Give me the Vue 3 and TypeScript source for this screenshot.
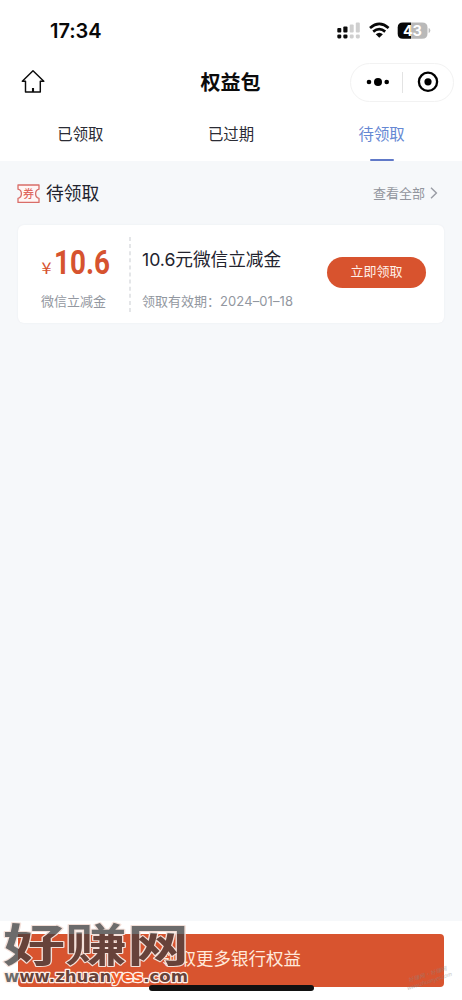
<script setup lang="ts">
import { ref } from 'vue'

interface Coupon {
  amount: string
  kind: string
  title: string
  expires: string
}

const tabs: string[] = ['已领取', '已过期', '待领取']
const active = ref<number>(2)
const coupons: Coupon[] = [
  { amount: '10.6', kind: '微信立减金', title: '10.6元微信立减金', expires: '2024–01–18' },
]
</script>

<template>
  <div class="page">
    <header class="status">
      <span class="time">17:34</span>
      <svg class="indicators" width="94" height="18" viewBox="0 0 94 18">
        <g fill="#0b0b0b">
          <rect x="0.3" y="6" width="4" height="4.4" rx="1" />
          <rect x="6.3" y="4.6" width="4.2" height="5.8" rx="1" />
          <rect x="0.3" y="12.4" width="4" height="4" rx="1.3" />
          <rect x="6.3" y="12.4" width="4.2" height="4" rx="1.3" />
        </g>
        <g fill="#cfcfcf">
          <rect x="12.7" y="2.5" width="4" height="8" rx="1" />
          <rect x="18.8" y="0.5" width="4" height="10" rx="1" />
          <rect x="12.7" y="12.4" width="4" height="4" rx="1.3" />
          <rect x="18.8" y="12.4" width="4" height="4" rx="1.3" />
        </g>
        <g fill="none" stroke="#080808" stroke-width="2.7">
          <path d="M33 5.9Q42.3 -2.1 51.6 5.9" />
          <path d="M36.2 9.6Q42.3 4.7 48.2 9.6" />
        </g>
        <path d="M38.7 12.2Q42.3 9.2 45.9 12.2L42.3 15.8Z" fill="#080808" />
        <path d="M74 .4H85Q90.5 .4 90.5 5.4V11.8Q90.5 16.8 85 16.8H74Z" fill="#b9b9b9" />
        <path d="M74 .4H66Q60.7 .4 60.7 5.4V11.8Q60.7 16.8 66 16.8H74Z" fill="#080808" />
        <path d="M91.6 6Q93.3 6.3 93.3 8.5T91.6 11Z" fill="#bdbdbd" />
        <text class="level" x="75.2" y="13.7" text-anchor="middle">43</text>
      </svg>
    </header>

    <nav class="nav">
      <svg class="home" width="26" height="26" viewBox="0 0 26 26" fill="none" stroke="#0c0c0c" stroke-width="1.45" stroke-linejoin="round">
        <path d="M5.5 12.2H2.3L13 1.8 23.8 12.2H20.3V23H5.5Z" />
        <path d="M13 19V23" stroke-width="2.1" />
      </svg>
      <h1>权益包</h1>
      <div class="capsule">
        <svg width="102" height="38" viewBox="0 0 102 38">
          <circle cx="18" cy="18" r="2.3" />
          <circle cx="27" cy="18" r="4" />
          <circle cx="35.7" cy="18" r="2.3" />
          <path d="M51.5 8V29" stroke="#e3e3e3" />
          <circle cx="77" cy="17.8" r="9.1" fill="none" stroke="#000" stroke-width="2.3" />
          <circle cx="77" cy="17.8" r="3.6" />
        </svg>
      </div>
    </nav>

    <div class="tabs">
      <button v-for="(tab, i) in tabs" :key="tab" :class="{ active: active === i }" @click="active = i">{{ tab }}</button>
    </div>

    <main>
      <div class="heading">
        <svg class="ticket" width="23" height="20" viewBox="0 0 23 20">
          <path d="M1 1H22V5.2Q18.6 6 18.6 9.7T22 14.4V18.4H1V14.4Q4.4 13.4 4.4 9.7T1 5.2Z" fill="#fff6f5" stroke="#d96d68" stroke-width="1.3" stroke-linejoin="round" />
          <text class="ticket-text" x="11.5" y="13.8" text-anchor="middle">券</text>
        </svg>
        <h2>待领取</h2>
        <a class="all">查看全部
          <svg width="8" height="12" viewBox="0 0 8 12" fill="none" stroke="#999ca4" stroke-width="1.4"><path d="M1 .8 6.4 6 1 11.2" /></svg>
        </a>
      </div>

      <article v-for="coupon in coupons" :key="coupon.title" class="card">
        <div class="value">
          <svg class="amount" width="76" height="46" viewBox="0 0 76 46">
            <text class="currency" x="0.5" y="34" textLength="10" lengthAdjust="spacingAndGlyphs">¥</text>
            <text class="number" x="13" y="34" textLength="56" lengthAdjust="spacingAndGlyphs">{{ coupon.amount }}</text>
          </svg>
          <span class="kind">{{ coupon.kind }}</span>
        </div>
        <svg class="divider" width="2" height="75" viewBox="0 0 2 75"><path d="M1 0V75" stroke="#d3d5d9" stroke-width="1.2" stroke-dasharray="4 3.1" /></svg>
        <div class="detail">
          <h3>{{ coupon.title }}</h3>
          <p>领取有效期：<span class="date">{{ coupon.expires }}</span></p>
        </div>
        <button class="claim">立即领取</button>
      </article>
    </main>

    <footer>
      <button class="more">领取更多银行权益</button>
      <i class="home-bar"></i>
      <svg class="brand" width="194" height="79" viewBox="0 0 194 79">
        <defs>
          <pattern id="brand-ink" width="194" height="79" patternUnits="userSpaceOnUse">
            <rect width="194" height="79" fill="#6c6b6b" />
            <rect x="18" y="13" width="176" height="53" fill="#67423a" />
          </pattern>
        </defs>
        <text class="brand-name" x="3" y="41" textLength="186" lengthAdjust="spacingAndGlyphs">好赚网</text>
        <text class="brand-url" x="4" y="60.5" textLength="184" lengthAdjust="spacingAndGlyphs">www.zhuan<tspan class="yes">yes</tspan>.com</text>
      </svg>
      <svg class="stamp" width="60" height="38" viewBox="0 0 60 38">
        <g transform="rotate(-18 30 19)">
          <text x="10" y="16" textLength="40">好赚网·好赚网</text>
          <text x="6" y="23" textLength="47">www.zhuanyes.com</text>
        </g>
      </svg>
    </footer>
  </div>
</template>

<style>
body { margin: 0; }
</style>

<style scoped>
* { box-sizing: border-box; }
.page {
  display: flex;
  flex-direction: column;
  width: 462px;
  height: 1000px;
  overflow: hidden;
  background: #fff;
  color: #22232e;
  font-family: "Liberation Sans", "Noto Sans CJK SC", sans-serif;
}
h1, h2, h3, p { margin: 0; font-weight: 400; }
button { padding: 0; border: 0; background: none; font-family: inherit; }
.status { display: flex; justify-content: space-between; height: 61px; padding: 19px 31px 0 50px; }
.time { font: 600 20px/24px Inter, sans-serif; color: #080808; letter-spacing: -.05px; }
.indicators { margin-top: 3px; }
.level { font: 700 14.5px Inter, sans-serif; fill: #fff; letter-spacing: -.4px; }
.nav { display: flex; align-items: center; justify-content: space-between; height: 42px; padding: 0 8px 0 20px; }
h1 { margin-left: 65px; padding-top: 2px; font-size: 20px; line-height: 42px; font-weight: 700; color: #0b0b0b; }
.capsule { width: 104px; height: 39px; border: 1px solid #f2f2f2; border-radius: 20px; }
.capsule svg { display: block; }
.tabs { display: flex; height: 58px; padding: 0 5px; }
.tabs button { position: relative; flex: 1; height: 58px; padding-top: 6px; line-height: 52px; font-size: 15.4px; color: #2b2c35; }
.tabs .active { color: #6688d3; }
.tabs .active::after { content: ""; position: absolute; left: 50%; bottom: 0; width: 24px; height: 2px; margin-left: -12px; border-radius: 1px; background: #6079c8; }
main { flex: 1; padding: 0 18px; background: #f6f8fa; }
.heading { display: flex; align-items: center; height: 64px; padding-right: 6px; }
.ticket { margin: 2px 0 0 -1px; }
.ticket-text { font: 500 11px "Noto Sans CJK SC", sans-serif; fill: #df6860; }
h2 { margin-left: 6px; padding-top: 2px; font-size: 17.8px; line-height: 26px; }
.all { display: flex; align-items: center; gap: 5px; margin-left: auto; margin-top: -1px; font-size: 13px; color: #92959d; }
.card { display: flex; height: 98px; border-radius: 6px; background: #fff; box-shadow: 0 0 2px #e9ebef; }
.value { width: 111px; padding: 15px 0 0 23px; }
.amount { display: block; overflow: visible; }
.currency { font: 16px "Noto Sans CJK SC", sans-serif; fill: #d6532f; }
.number { font: 700 33px Roboto, sans-serif; fill: #d6532f; }
.kind { display: block; margin-top: 6px; font-size: 13px; line-height: 20px; color: #9297a0; }
.divider { margin-top: 12px; }
.detail { width: 185px; padding: 22px 0 0 11px; white-space: nowrap; }
h3 { font: 17.7px/26px Inter, "Noto Sans CJK SC", sans-serif; letter-spacing: -.05px; }
.detail p { margin-top: 18px; font-size: 13px; line-height: 20px; color: #9297a0; }
.date { font-family: Inter, sans-serif; letter-spacing: .1px; }
.claim { width: 99px; height: 31px; margin: 32px 0 0 11px; padding-bottom: 2px; border-radius: 16px; background: #d8532e; color: #fff0e8; font-size: 13px; line-height: 28px; }
footer { position: relative; height: 79px; padding: 13px 18px; background: #fff; }
.more { display: block; width: 426px; height: 53px; padding-bottom: 4px; border-radius: 4px; background: #d8542f; color: #ffe9db; font-size: 17.5px; line-height: 48px; }
.home-bar { position: absolute; left: 149px; top: 64px; width: 165px; height: 6px; border-radius: 3px; background: #111; }
.brand { position: absolute; left: 0; top: 0; overflow: visible; }
.brand-name { font: 700 45px "Noto Sans CJK SC", sans-serif; fill: url(#brand-ink); stroke: #f3dfd8; stroke-width: 2; stroke-linejoin: round; paint-order: stroke; }
.brand-url { font: 700 15px "DejaVu Sans", sans-serif; fill: url(#brand-ink); stroke: #fff0e9; stroke-width: 2.4; stroke-linejoin: round; paint-order: stroke; }
.brand-url .yes { fill: #ee5a28; }
.stamp { position: absolute; left: 399px; top: 39px; font: italic 5.5px "Noto Sans CJK SC", sans-serif; fill: #888; opacity: .5; }
</style>
